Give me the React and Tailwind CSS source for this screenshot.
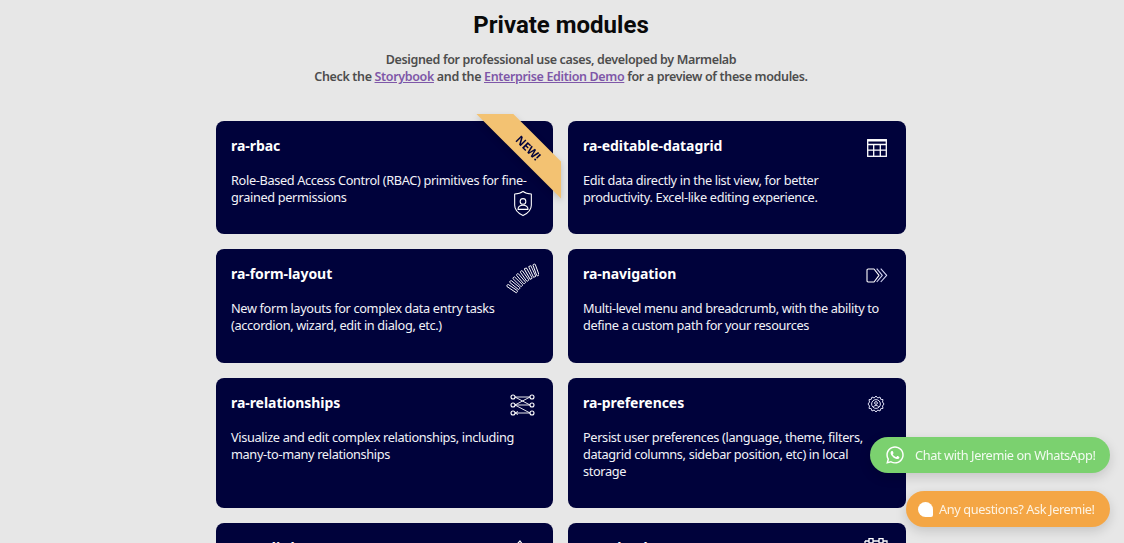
import React from "react";
import { FaWhatsapp } from "react-icons/fa";

const slats = [-56, -50.8, -45.6, -40.4, -35.2, -30, -24.8, -20];

const icons = {
  shield: (
    <svg viewBox="0 0 24 32" width="20" height="27" fill="none" stroke="white" strokeWidth="1.3" strokeLinejoin="round">
      <path d="M12 1.5 C15 4 18 4.5 22 4.5 L22 18 C22 24 17 28 12 30.5 C7 28 2 24 2 18 L2 4.5 C6 4.5 9 4 12 1.5 Z" />
      <circle cx="12" cy="13.5" r="3.4" />
      <path d="M6 23 C6 18.5 9 18 12 18 C15 18 18 18.5 18 23 Z" />
    </svg>
  ),
  table: (
    <svg width="20" height="18" viewBox="0 0 20 18" fill="none" stroke="white" strokeWidth="1.3">
      <rect x="0.7" y="0.7" width="18.6" height="16.6" />
      <path d="M0.7 1.6 H19.3" strokeWidth="1.8" />
      <path d="M0.7 5.5 H19.3 M0.7 11.2 H19.3 M6.7 5.5 V17.3 M13.3 5.5 V17.3" />
    </svg>
  ),
  spring: (
    <svg width="34" height="34" viewBox="0 0 34 34" fill="none" stroke="white" strokeWidth="0.9">
      {slats.map((a) => (
        <rect key={a} x="46.5" y="0" width="2.4" height="12" rx="0.6" transform={`rotate(${a} 47.7 54.9)`} />
      ))}
    </svg>
  ),
  nav: (
    <svg width="22" height="15" viewBox="0 0 22 15" fill="none" stroke="white" strokeWidth="1.1" strokeLinejoin="round">
      <path d="M2.2 1 H8 L13 7.3 L8 14 H2.2 Q1 14 1 12.8 V2.2 Q1 1 2.2 1 Z" />
      <path d="M10.7 0.6 L16.3 7.3 L10.7 14" stroke="#d4d6f4" />
      <path d="M14.7 0.6 L20.7 7.3 L14.7 14" stroke="#d4d6f4" />
    </svg>
  ),
  rel: (
    <svg width="25" height="22" viewBox="0 0 25 22" fill="none" stroke="white" strokeWidth="1.1">
      <circle cx="3" cy="3" r="2" /><circle cx="3" cy="11" r="2" /><circle cx="3" cy="19" r="2" />
      <circle cx="22" cy="3" r="2" /><circle cx="22" cy="11" r="2" /><circle cx="22" cy="19" r="2" />
      <path d="M5 3 H20 M5 11 L20 3 M5 3 L20 11 M5 11 H20 M5 11 L20 19 M5 19 H20 M5 19 L8 17.5 M5 19 L8 20.5" strokeWidth="0.9" />
    </svg>
  ),
  gear: (
    <svg width="18" height="18" viewBox="0 0 18 18" fill="none" stroke="#dfe0f5" strokeWidth="1">
      <path d="M9 1 L10.8 3 L13 2 L13.7 4.3 L16 4.6 L15.5 7 L17 9 L15.5 11 L16 13.4 L13.7 13.7 L13 16 L10.8 15 L9 17 L7.2 15 L5 16 L4.3 13.7 L2 13.4 L2.5 11 L1 9 L2.5 7 L2 4.6 L4.3 4.3 L5 2 L7.2 3 Z" />
      <circle cx="9" cy="9" r="4.4" />
      <circle cx="9" cy="8" r="1.4" />
      <path d="M6.5 12 C6.5 10 11.5 10 11.5 12" />
    </svg>
  ),
  feather: (
    <svg width="22" height="22" viewBox="0 0 22 22" fill="none" stroke="white" strokeWidth="1.2"><path d="M18 1 L21 5 L8 20 L3 21 L4 16 Z" /></svg>
  ),
  cal: (
    <svg width="24" height="24" viewBox="0 0 24 24" fill="none" stroke="white" strokeWidth="1.3">
      <path d="M1 3 H5 M9 3 H15 M19 3 H23 V23 H1 V3 M9 0.5 H5 V5 H9 Z M19 0.5 H15 V5 H19 Z M1 8 H23" />
    </svg>
  ),
};

const modules = [
  { t: "ra-rbac", d: "Role-Based Access Control (RBAC) primitives for fine-grained permissions", i: "shield", pos: "right-[20px] top-[69px]", isNew: true },
  { t: "ra-editable-datagrid", d: "Edit data directly in the list view, for better productivity. Excel-like editing experience.", i: "table", pos: "right-[19.5px] top-[18px]" },
  { t: "ra-form-layout", d: "New form layouts for complex data entry tasks (accordion, wizard, edit in dialog, etc.)", i: "spring", pos: "right-[14px] top-[12px]" },
  { t: "ra-navigation", d: "Multi-level menu and breadcrumb, with the ability to define a custom path for your resources", i: "nav", pos: "right-[18px] top-[19px]" },
  { t: "ra-relationships", d: "Visualize and edit complex relationships, including many-to-many relationships", i: "rel", pos: "right-[18px] top-[16px]" },
  { t: "ra-preferences", d: "Persist user preferences (language, theme, filters, datagrid columns, sidebar position, etc) in local storage", i: "gear", pos: "right-[21px] top-[17px]" },
  { t: "ra-audit-log", d: "Track all the changes made to your data, and display them in a timeline", i: "feather", pos: "right-[29px] top-[17px]" },
  { t: "ra-calendar", d: "Display and manipulate events, drag and resize appointments, and browse a calendar", i: "cal", pos: "right-[18px] top-[15px]" },
];

export default function App() {
  return (
    <div className="relative h-[543px] overflow-hidden bg-[#e7e7e7] font-['Noto_Sans',sans-serif]">
      <div className="w-[1122px]">
        <h2 className="pt-[9px] text-center font-['Roboto',sans-serif] text-2xl leading-8 font-bold text-[#0a0a0a]">Private modules</h2>
        <p className="mt-[10px] text-center text-[12.5px] leading-[17px] font-semibold tracking-[-0.35px] text-[#4d4d4d]">
          Designed for professional use cases, developed by Marmelab
          <br />
          Check the <a className="text-[#7e57a8] underline">Storybook</a> and the <a className="text-[#7e57a8] underline">Enterprise Edition Demo</a> for a preview of these modules.
        </p>
        <div className="mx-auto mt-[35.6px] grid w-[690px] grid-cols-[337px_338px] gap-[15px]">
          {modules.map((m) => (
            <div key={m.t} className="relative rounded-lg bg-[#00023b] px-[15px] pt-[15px] pb-[28.5px] text-white">
              <h3 className="text-[14px] leading-[20px] font-bold tracking-[-0.05px]">{m.t}</h3>
              <p className="mt-[16px] pr-[9px] text-[12.75px] leading-[17px] tracking-[-0.35px] text-[#f2f2f8]">{m.d}</p>
              <div className={`absolute ${m.pos}`}>{icons[m.i]}</div>
              {m.isNew && (
                <div className="absolute top-[-7px] left-[260px] drop-shadow-[0_3px_3px_rgba(0,0,0,0.18)]">
                  <div className="relative h-[85px] w-[85px] bg-[#f3c272] [clip-path:polygon(0_0,43.5%_0,100%_56.5%,100%_100%)]">
                    <span className="absolute top-[34px] left-[52px] -translate-x-1/2 -translate-y-1/2 rotate-45 text-[11.5px] leading-[14px] font-bold tracking-[-0.2px] text-[#00023b]">NEW!</span>
                  </div>
                </div>
              )}
            </div>
          ))}
        </div>
      </div>
      <div className="fixed top-[437px] right-[14px] flex h-[36px] w-[240px] items-center rounded-[18px] bg-[#7bd16f] pl-[15px] text-[12.75px] tracking-[-0.4px] whitespace-nowrap text-[#f2fbf0] shadow-[0_4px_12px_rgba(0,0,0,0.15)]">
        <FaWhatsapp size={20} color="white" />
        <span className="mt-[2px] ml-[10px]">Chat with Jeremie on WhatsApp!</span>
      </div>
      <div className="fixed top-[491px] right-[14px] flex h-[36px] w-[204px] items-center rounded-[18px] bg-[#f4a645] pl-[12px] text-[12.75px] tracking-[-0.4px] whitespace-nowrap text-[#fdf3e3] shadow-[0_4px_12px_rgba(0,0,0,0.15)]">
        <span className="h-[15px] w-[15px] rounded-[50%_50%_2px_50%] bg-white" />
        <span className="mt-[2px] ml-[6px]">Any questions? Ask Jeremie!</span>
      </div>
    </div>
  );
}
